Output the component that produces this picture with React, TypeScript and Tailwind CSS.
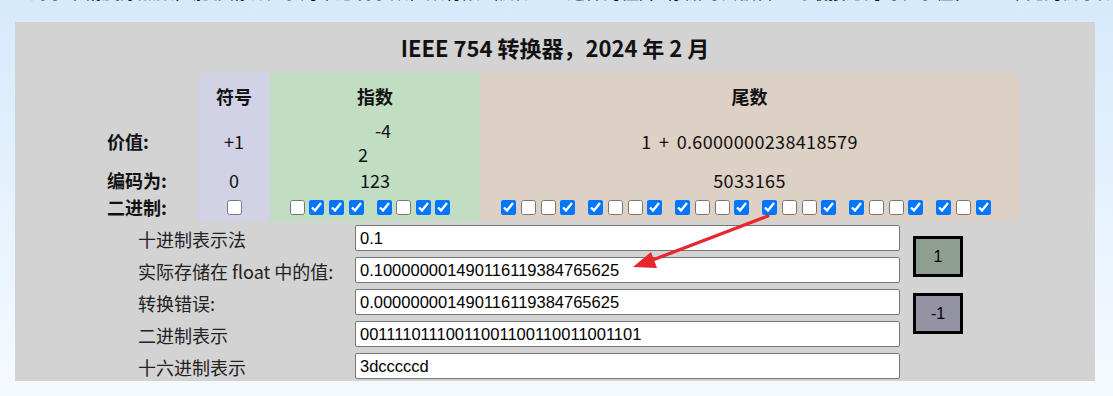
const cjk = "font-['Noto_Sans_CJK_SC','Noto_Sans',sans-serif]";
const arial = "font-['Liberation_Sans','Noto_Sans_CJK_SC',sans-serif]";

const bits = "00111101110011001100110011001101";

const Box = ({ on }: { on: boolean }) => (
    <input type="checkbox" checked={on} readOnly className="w-[15px] h-[15px] m-0 shrink-0" />
);

const Group = ({ s }: { s: string }) => (
    <div className="flex gap-[4.6px]">
        {s.split("").map((b, i) => (
            <Box key={i} on={b === "1"} />
        ))}
    </div>
);

const chunk = (s: string) => {
    const out: string[] = [];
    for (let i = 0; i < s.length; i += 4) out.push(s.slice(i, i + 4));
    return out;
};

const rows = [
    { label: "十进制表示法", value: "0.1" },
    { label: "实际存储在 float 中的值:", value: "0.100000001490116119384765625" },
    { label: "转换错误:", value: "0.000000001490116119384765625" },
    { label: "二进制表示", value: bits },
    { label: "十六进制表示", value: "3dcccccd" },
];

const App = () => {
    const sign = bits.slice(0, 1);
    const exp = bits.slice(1, 9);
    const man = bits.slice(9);

    return (
        <div className={`relative w-[1113px] h-[396px] overflow-hidden bg-gradient-to-b from-[#d6eafc] to-[#f5faff] ${cjk}`}>
            {/* tail of the paragraph above, mostly scrolled off */}
            <div className="h-[22px] overflow-hidden">
                <p className="mt-[-21px] pl-[30px] text-[18px] leading-[24px] text-[#111] whitespace-nowrap">
                    对于单精度浮点数，能够精确表示的十进制小数位数有限（例如 0.1 这样的值），存储时会被舍入为最接近的可表示值，一个常见的例子如下所示。
                </p>
            </div>

            <div className="ml-[15px] w-[1080px] h-[359px] bg-[#d3d3d3] flex flex-col">
                <div className="h-[51px] flex items-center justify-center text-[22px] font-bold text-[#111]">
                    IEEE 754 转换器，2024 年 2 月
                </div>

                <div className="ml-[90px] grid grid-cols-[93px_72px_210px_539px] grid-rows-[46px_48px_27px_27px] text-[18px] text-[#111]">
                    {/* header */}
                    <div />
                    <div className="bg-[#d2d2e6] flex items-center justify-center font-bold">符号</div>
                    <div className="bg-[#c1ddc2] flex items-center justify-center font-bold">指数</div>
                    <div className="bg-[#ddd0c4] flex items-center justify-center font-bold">尾数</div>

                    {/* value */}
                    <div className="flex items-center pl-[2px] pb-[3px] font-bold">价值:</div>
                    <div className="bg-[#d2d2e6] flex items-center justify-center pb-[3px]">+1</div>
                    <div className="bg-[#c1ddc2] flex flex-col items-center justify-center leading-[24px] pb-[2px]">
                        <span className="ml-[16px]">-4</span>
                        <span className="mr-[24px]">2</span>
                    </div>
                    <div className="bg-[#ddd0c4] flex items-center justify-center pb-[3px] tracking-[0.35px] [word-spacing:3px]">
                        1 + 0.6000000238418579
                    </div>

                    {/* encoded */}
                    <div className="flex items-center pl-[2px] font-bold">编码为:</div>
                    <div className="bg-[#d2d2e6] flex items-center justify-center">0</div>
                    <div className="bg-[#c1ddc2] flex items-center justify-center">123</div>
                    <div className="bg-[#ddd0c4] flex items-center justify-center tracking-[0.4px]">5033165</div>

                    {/* binary */}
                    <div className="flex items-center pl-[2px] font-bold">二进制:</div>
                    <div className="bg-[#d2d2e6] flex items-center justify-center">
                        <Box on={sign === "1"} />
                    </div>
                    <div className="bg-[#c1ddc2] flex items-center justify-center gap-[13px] pr-[10px]">
                        {chunk(exp).map((g, i) => (
                            <Group key={i} s={g} />
                        ))}
                    </div>
                    <div className="bg-[#ddd0c4] flex items-center justify-center gap-[13.2px] pr-[7px]">
                        {chunk(man).map((g, i) => (
                            <Group key={i} s={g} />
                        ))}
                    </div>
                </div>

                <div className="mt-[4px] ml-[123px] flex">
                    <div className="grid grid-cols-[217px_545px] gap-y-[6px]">
                        {rows.map((r) => (
                            <div key={r.label} className="contents">
                                <div className="h-[26px] flex items-center text-[18px] text-[#222] leading-none pt-[2px]">
                                    {r.label}
                                </div>
                                <input
                                    readOnly
                                    value={r.value}
                                    className={`h-[26px] w-[545px] bg-white border border-[#767676] rounded-[2px] px-[4px] text-[16.5px] text-black ${arial}`}
                                />
                            </div>
                        ))}
                    </div>
                    <div className={`ml-[13px] flex flex-col gap-[16px] mt-[11px] ${arial}`}>
                        <button className="w-[50px] h-[41px] bg-[#8f9f8f] border-[3px] border-black text-[16px] text-black">1</button>
                        <button className="w-[50px] h-[41px] bg-[#9393a3] border-[3px] border-black text-[16px] text-black">-1</button>
                    </div>
                </div>
            </div>

            {/* red annotation arrow */}
            <svg className="absolute left-0 top-0 pointer-events-none" width="1113" height="396">
                <line x1="768" y1="216" x2="650" y2="261" stroke="#e8262b" strokeWidth="3.2" strokeLinecap="round" />
                <polygon points="633,267 651,252 657,268" fill="#e8262b" />
            </svg>
        </div>
    );
};

export default App;
